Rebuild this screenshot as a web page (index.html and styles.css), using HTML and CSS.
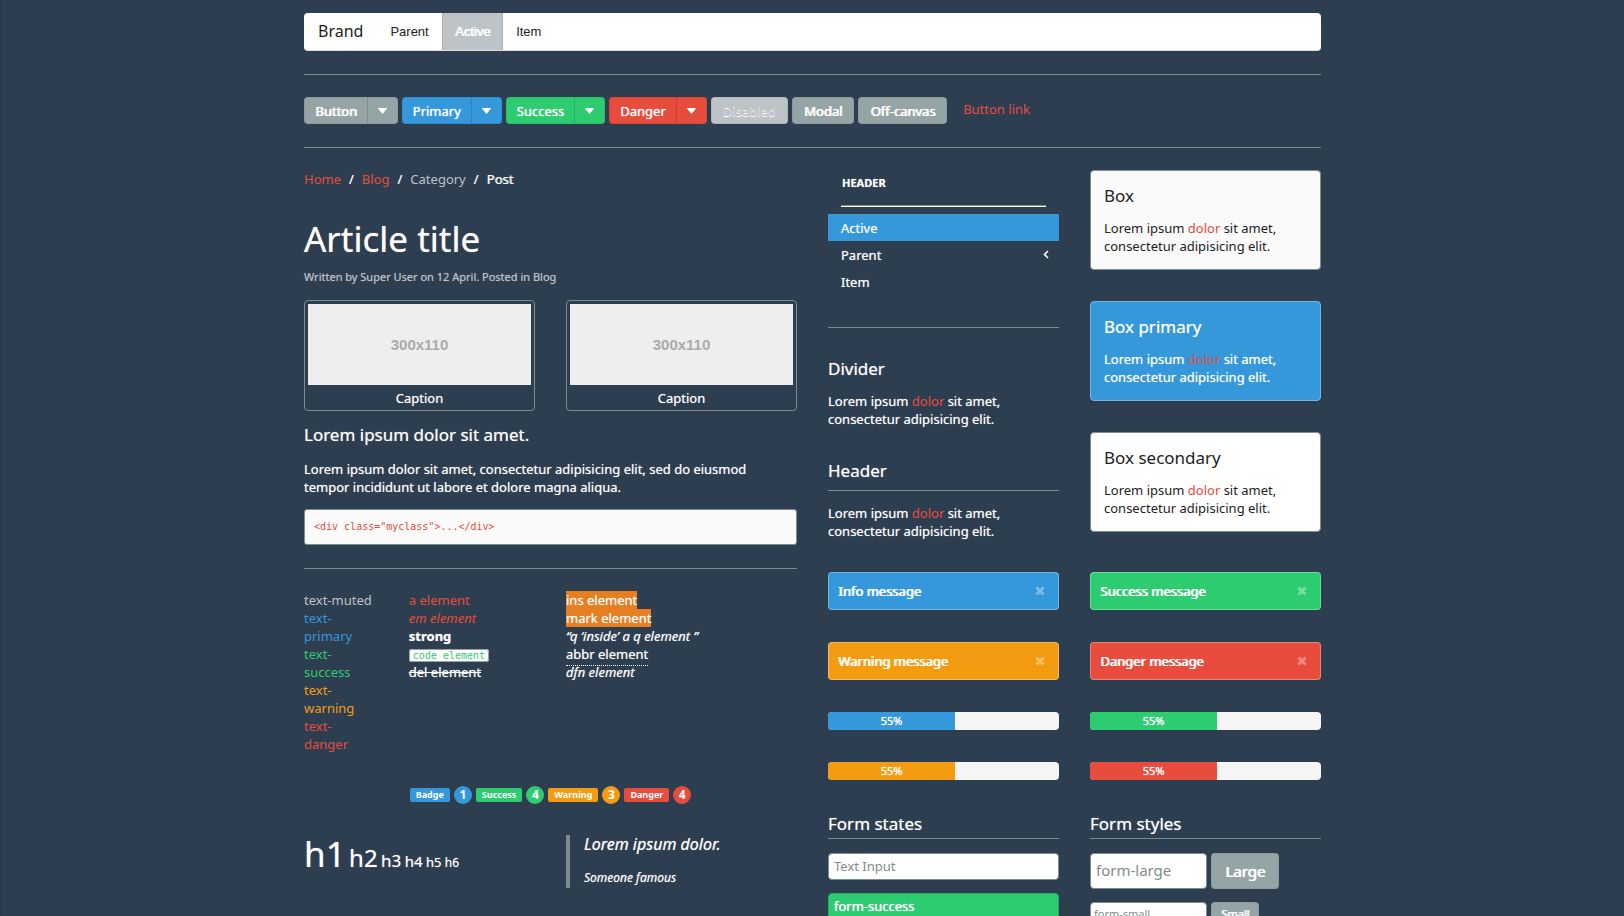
FILE: index.html
```html
<!DOCTYPE html>
<html lang="en">
<head>
<meta charset="utf-8">
<title>Style overview</title>
<link rel="stylesheet" href="styles.css">
</head>
<body>
<div class="container">
  <nav class="navbar">
    <a class="navbar-brand" href="#">Brand</a>
    <a class="navbar-item" href="#">Parent</a>
    <a class="navbar-item active" href="#">Active</a>
    <a class="navbar-item" href="#">Item</a>
  </nav>
  <hr class="rule">
  <div class="buttons">
    <div class="button-group"><button class="button">Button</button><button class="button caret" aria-label="Button menu"><svg width="9" height="6" viewBox="0 0 9 6"><path d="M0 .6Q0 0 .7 0H8.300Q9 0 9 .6L4.900 5.500Q4.500 6 4.100 5.500Z"/></svg></button></div>
    <div class="button-group"><button class="button primary">Primary</button><button class="button primary caret" aria-label="Primary menu"><svg width="9" height="6" viewBox="0 0 9 6"><path d="M0 .6Q0 0 .7 0H8.300Q9 0 9 .6L4.900 5.500Q4.500 6 4.100 5.500Z"/></svg></button></div>
    <div class="button-group"><button class="button success">Success</button><button class="button success caret" aria-label="Success menu"><svg width="9" height="6" viewBox="0 0 9 6"><path d="M0 .6Q0 0 .7 0H8.300Q9 0 9 .6L4.900 5.500Q4.500 6 4.100 5.500Z"/></svg></button></div>
    <div class="button-group"><button class="button danger">Danger</button><button class="button danger caret" aria-label="Danger menu"><svg width="9" height="6" viewBox="0 0 9 6"><path d="M0 .6Q0 0 .7 0H8.300Q9 0 9 .6L4.900 5.500Q4.500 6 4.100 5.500Z"/></svg></button></div>
    <button class="button disabled" disabled>Disabled</button>
    <button class="button">Modal</button>
    <button class="button">Off-canvas</button>
    <a class="button-link" href="#">Button link</a>
  </div>
  <hr class="rule">
  <div class="grid">
    <main class="article">
      <nav class="breadcrumb"><a href="#">Home</a><span>/</span><a href="#">Blog</a><span>/</span><span class="muted">Category</span><span>/</span><span class="current">Post</span></nav>
      <h1 class="title">Article title</h1>
      <p class="meta">Written by Super User on 12 April. Posted in Blog</p>
      <div class="halves">
        <figure class="thumb"><div class="placeholder">300x110</div><figcaption>Caption</figcaption></figure>
        <figure class="thumb"><div class="placeholder">300x110</div><figcaption>Caption</figcaption></figure>
      </div>
      <p class="lead">Lorem ipsum dolor sit amet.</p>
      <p class="copy">Lorem ipsum dolor sit amet, consectetur adipisicing elit, sed do eiusmod tempor incididunt ut labore et dolore magna aliqua.</p>
      <pre class="pre">&lt;div class="myclass"&gt;...&lt;/div&gt;</pre>
      <hr class="rule">
      <div class="samples">
        <div class="sample-narrow">
          <div class="muted">text-muted</div>
          <div class="text-primary">text-primary</div>
          <div class="text-success">text-success</div>
          <div class="text-warning">text-warning</div>
          <div class="text-danger">text-danger</div>
        </div>
        <div class="sample-mid">
          <div><a href="#">a element</a></div>
          <div><em class="text-danger">em element</em></div>
          <div><strong>strong</strong></div>
          <div><code class="code">code element</code></div>
          <div><del>del element</del></div>
        </div>
        <div class="sample-wide">
          <div><ins class="mark">ins element</ins></div>
          <div><mark class="mark">mark element</mark></div>
          <div><q class="quote">q <q>inside</q> a q element </q></div>
          <div><abbr class="abbr">abbr element</abbr></div>
          <div><dfn>dfn element</dfn></div>
        </div>
      </div>
      <div class="badges">
        <span class="badge primary">Badge</span><span class="count primary">1</span>
        <span class="badge success">Success</span><span class="count success">4</span>
        <span class="badge warning">Warning</span><span class="count warning">3</span>
        <span class="badge danger">Danger</span><span class="count danger">4</span>
      </div>
      <div class="halves">
        <div class="headings"><span class="h1">h1</span> <span class="h2">h2</span> <span class="h3">h3</span> <span class="h4">h4</span> <span class="h5">h5</span> <span class="h6">h6</span></div>
        <blockquote class="blockquote"><p>Lorem ipsum dolor.</p><small>Someone famous</small></blockquote>
      </div>
    </main>
    <aside class="aside">
      <div class="column">
        <div class="side-nav">
          <div class="side-header">HEADER</div>
          <div class="side-divider"></div>
          <a class="side-item active" href="#">Active</a>
          <a class="side-item" href="#">Parent<svg width="6" height="9" viewBox="0 0 6 9"><path d="M5 1 1.500 4.500 5 8" fill="none" stroke="#fff" stroke-width="1.600"/></svg></a>
          <a class="side-item" href="#">Item</a>
        </div>
        <section class="panel divided"><h3>Divider</h3><p>Lorem ipsum <a href="#">dolor</a> sit amet, consectetur adipisicing elit.</p></section>
        <section class="panel headed"><h3>Header</h3><p>Lorem ipsum <a href="#">dolor</a> sit amet, consectetur adipisicing elit.</p></section>
      </div>
      <div class="column boxes">
        <section class="box light"><h3>Box</h3><p>Lorem ipsum <a href="#">dolor</a> sit amet, consectetur adipisicing elit.</p></section>
        <section class="box blue"><h3>Box primary</h3><p>Lorem ipsum <a href="#">dolor</a> sit amet, consectetur adipisicing elit.</p></section>
        <section class="box white"><h3>Box secondary</h3><p>Lorem ipsum <a href="#">dolor</a> sit amet, consectetur adipisicing elit.</p></section>
      </div>
      <div class="alert primary">Info message<button class="close" aria-label="Close"><svg width="10" height="10" viewBox="0 0 10 10"><path d="M1.500 1.500 8.500 8.500M8.500 1.500 1.500 8.500"/></svg></button></div>
      <div class="alert success">Success message<button class="close" aria-label="Close"><svg width="10" height="10" viewBox="0 0 10 10"><path d="M1.500 1.500 8.500 8.500M8.500 1.500 1.500 8.500"/></svg></button></div>
      <div class="alert warning">Warning message<button class="close" aria-label="Close"><svg width="10" height="10" viewBox="0 0 10 10"><path d="M1.500 1.500 8.500 8.500M8.500 1.500 1.500 8.500"/></svg></button></div>
      <div class="alert danger">Danger message<button class="close" aria-label="Close"><svg width="10" height="10" viewBox="0 0 10 10"><path d="M1.500 1.500 8.500 8.500M8.500 1.500 1.500 8.500"/></svg></button></div>
      <div class="progress"><div class="bar primary" style="width:55%">55%</div></div>
      <div class="progress"><div class="bar success" style="width:55%">55%</div></div>
      <div class="progress"><div class="bar warning" style="width:55%">55%</div></div>
      <div class="progress"><div class="bar danger" style="width:55%">55%</div></div>
      <form class="form">
        <h3>Form states</h3>
        <input class="input" type="text" placeholder="Text Input" aria-label="Text Input">
        <input class="input valid" type="text" value="form-success" aria-label="Success state">
      </form>
      <form class="form">
        <h3>Form styles</h3>
        <div class="form-row large"><input class="input" type="text" placeholder="form-large" aria-label="Large"><button class="button" type="button">Large</button></div>
        <div class="form-row small"><input class="input" type="text" placeholder="form-small" aria-label="Small"><button class="button" type="button">Small</button></div>
      </form>
    </aside>
  </div>
</div>
</body>
</html>
```
FILE: styles.css
```css
* { box-sizing: border-box; }
html { background: #2d3e50; scrollbar-width: none; }
body {
  margin: 0;
  color: #fff;
  font: 13px/18px "Noto Sans", "Open Sans", sans-serif;
  border-left: 1px solid #28394a;
}
h1, h3, p, figure, blockquote, pre { margin: 0; font-weight: 400; }
a { color: #e74c3c; text-decoration: none; }
button, input { font: inherit; color: inherit; }
.container { max-width: 1067px; margin: 0 auto; padding: 13px 25px 0; }
.rule { height: 1px; margin: 23px 0 22px; border: 0; background: #7f8c8d; }

.primary { background: #3498db; }
.success { background: #2ecc71; }
.warning { background: #f39c12; }
.danger { background: #e74c3c; }
.muted { color: #bdc3c7; }
.text-primary { color: #3498db; }
.text-success { color: #2ecc71; }
.text-warning { color: #f39c12; }
.text-danger { color: #e74c3c; }

.navbar { display: flex; height: 38px; background: #fff; border-radius: 4px; border-bottom: 1px solid #ddd; }
.navbar a { display: flex; align-items: center; color: #222; }
.navbar-brand { padding: 0 14px 2px; font-size: 16px; }
.navbar .navbar-item { padding: 0 12px; font-family: "Liberation Sans", Arial, sans-serif; border: solid transparent; border-width: 0 1px; }
.navbar .navbar-item.active { color: #fff; background: #bdc3c7; border-color: #a9b0b4; text-shadow: 1px 0 0 #fff; }

.buttons { display: flex; gap: 4px; }
.button-group { display: flex; }
.button {
  height: 27px;
  padding: 0 11px;
  color: #fff;
  background-color: #95a5a6;
  border: 1px solid rgba(0, 0, 0, .06);
  border-radius: 4px;
  line-height: 24px;
  text-shadow: 1px 0 0 #fff;
}
.button.primary { background: #3498db; text-shadow: 0 0 1px #fff; }
.button.success { background: #2ecc71; text-shadow: 0 0 1px #fff; }
.button.danger { background: #e74c3c; text-shadow: 0 0 1px #fff; }
.button.disabled { background: #bdc3c7; color: #bdc3c7; text-shadow: 0 1px 0 #fff; }
.button-group .button:first-child { padding: 0 10px; border-right: 0; border-radius: 4px 0 0 4px; }
.button-group .button.caret { width: 31px; padding: 0 10px; border-radius: 0 4px 4px 0; border-left: 1px solid rgba(0, 0, 0, .14); }
.caret svg { display: block; fill: #fff; }
.button-link { padding: 0 12px; line-height: 25px; }

.grid { display: grid; grid-template-columns: 1fr 1fr; gap: 31px; }
.article { min-width: 0; text-shadow: 0 0 1px rgba(255, 255, 255, .6); }
.article a, .article .muted, .panel a, .box a, [class^="text-"] { text-shadow: none; }
.breadcrumb { display: flex; gap: 8px; }
.current { text-shadow: 1px 0 0 rgba(255, 255, 255, .6); }
.title { margin-top: 30px; font-size: 35px; line-height: 42px; }
.meta { margin: 8px 0 14px; font-size: 11px; color: #bdc3c7; text-shadow: 0 0 1px rgba(189, 195, 199, .6); }
.halves { display: grid; grid-template-columns: 1fr 1fr; gap: 31px; }
.thumb { padding: 3px; border: 1px solid #7f8c8d; border-radius: 4px; }
.placeholder {
  display: grid;
  place-items: center;
  height: 81px;
  background: #eee;
  color: #aaa;
  font: bold 15px "Liberation Sans", Arial, sans-serif;
  text-shadow: none;
}
.thumb figcaption { padding: 4px 0 0; text-align: center; }
.lead { margin-top: 12px; font-size: 17px; line-height: 24px; }
.copy { margin: 13px 0; padding-right: 16px; }
.pre {
  padding: 8px 9px;
  background: #fafafa;
  color: #e74c3c;
  border: 1px solid #7f8c8d;
  border-radius: 3px;
  font: 10px/18px "DejaVu Sans Mono", monospace;
  text-shadow: none;
}

.samples { display: grid; grid-template-columns: repeat(10, 1fr); column-gap: 31px; }
.sample-narrow { grid-column: span 2; min-width: 0; padding-right: 4px; }
.sample-mid { grid-column: span 3; min-width: 0; }
.sample-wide { grid-column: span 5; min-width: 0; }
.code { padding: 0 3px; background: #fff; color: #2ecc71; border: 1px solid #95a5a6; border-radius: 3px; font: 10px/12px "DejaVu Sans Mono", monospace; text-shadow: none; }
.mark { background: #e67e22; color: #fff; text-decoration: none; }
.quote { font-style: italic; }
.abbr { padding-bottom: 2px; border-bottom: 1px dotted #fff; }
.badges { display: flex; justify-content: center; align-items: center; gap: 4px; margin: 33px 0 31px; text-shadow: none; }
.badge { padding: 0 6px; border-radius: 2px; font-size: 9px; font-weight: 700; line-height: 14px; }
.count { width: 18px; border-radius: 9px; font-size: 12px; font-weight: 700; line-height: 18px; text-align: center; }
.headings { white-space: nowrap; }
.h1 { font-size: 35px; line-height: 38px; }
.h2 { font-size: 24px; }
.h3 { font-size: 17px; }
.h4 { font-size: 15px; }
.h5 { font-size: 13px; }
.h6 { font-size: 12px; }
.blockquote { padding-left: 14px; border-left: 4px solid #7f8c8d; font-style: italic; }
.blockquote p { margin-bottom: 16px; font-size: 16px; }
.blockquote small { display: block; padding-bottom: 1px; font-size: 12px; }

.aside { display: grid; grid-template-columns: 1fr 1fr; gap: 32px 31px; align-content: start; min-width: 0; text-shadow: 0 0 1px rgba(255, 255, 255, .6); }
.column { min-width: 0; }
.side-nav { padding-top: 4px; }
.side-header { padding: 0 14px; font-size: 11px; font-weight: 700; }
.side-divider { height: 2px; margin: 13px 13px 7px; border-top: 1px solid #7f8c8d; background: #fff; }
.side-item { display: flex; align-items: center; justify-content: space-between; height: 27px; padding: 0 10px 0 13px; color: #fff; }
.side-item.active { background: #3498db; }
h3 { font-size: 17px; line-height: 24px; }
.panel h3 { margin-bottom: 11px; }
.divided { margin-top: 32px; padding-top: 29px; border-top: 1px solid #7f8c8d; }
.headed { margin-top: 31px; }
.panel.headed h3 { margin-bottom: 13px; padding-bottom: 7px; border-bottom: 1px solid #7f8c8d; }
.boxes { display: flex; flex-direction: column; gap: 31px; }
.box { padding: 13px 13px 14px; border: 1px solid #7f8c8d; border-radius: 4px; }
.box h3 { margin-bottom: 11px; }
.light { color: #222; background: #fafafa; text-shadow: none; }
.white { color: #222; background: #fff; text-shadow: none; }
.blue { background: #3498db; border-color: #74b7e5; }

.alert { display: flex; justify-content: space-between; align-items: center; height: 38px; padding: 0 13px 0 9px; border: 1px solid rgba(255, 255, 255, .3); border-radius: 4px; background-clip: border-box; text-shadow: 1px 0 0 #fff; }
.close { padding: 0; border: 0; background: none; }
.close svg { display: block; stroke: rgba(255, 255, 255, .35); stroke-width: 3; }
.progress { height: 18px; background: #f5f5f5; border-radius: 4px; overflow: hidden; }
.bar { font-size: 11px; text-align: center; text-shadow: 0 0 1px #fff; }
.form { display: flex; flex-direction: column; gap: 13px; }
.form h3 { padding-bottom: 2px; margin-bottom: 1px; border-bottom: 1px solid #7f8c8d; }
.input { width: 100%; height: 27px; padding: 0 5px 2px; background: #fff; color: #222; border: 1px solid #7f8c8d; border-radius: 4px; }
.input::placeholder { color: #7f8c8d; opacity: 1; text-shadow: none; }
.input.valid { background: #2ecc71; color: #fff; border-color: #27ae60; text-shadow: 0 0 1px #fff; }
.form-row { display: flex; gap: 4px; }
.form-row .input { width: 117px; }
.large .input, .large .button { height: 36px; font-size: 15px; }
.large .button { padding: 0 13px; }
.small .input, .small .button { height: 23px; font-size: 11px; }
.small .input { padding: 0 3px; }
.small .button { padding: 0 9px; line-height: 20px; }
```
